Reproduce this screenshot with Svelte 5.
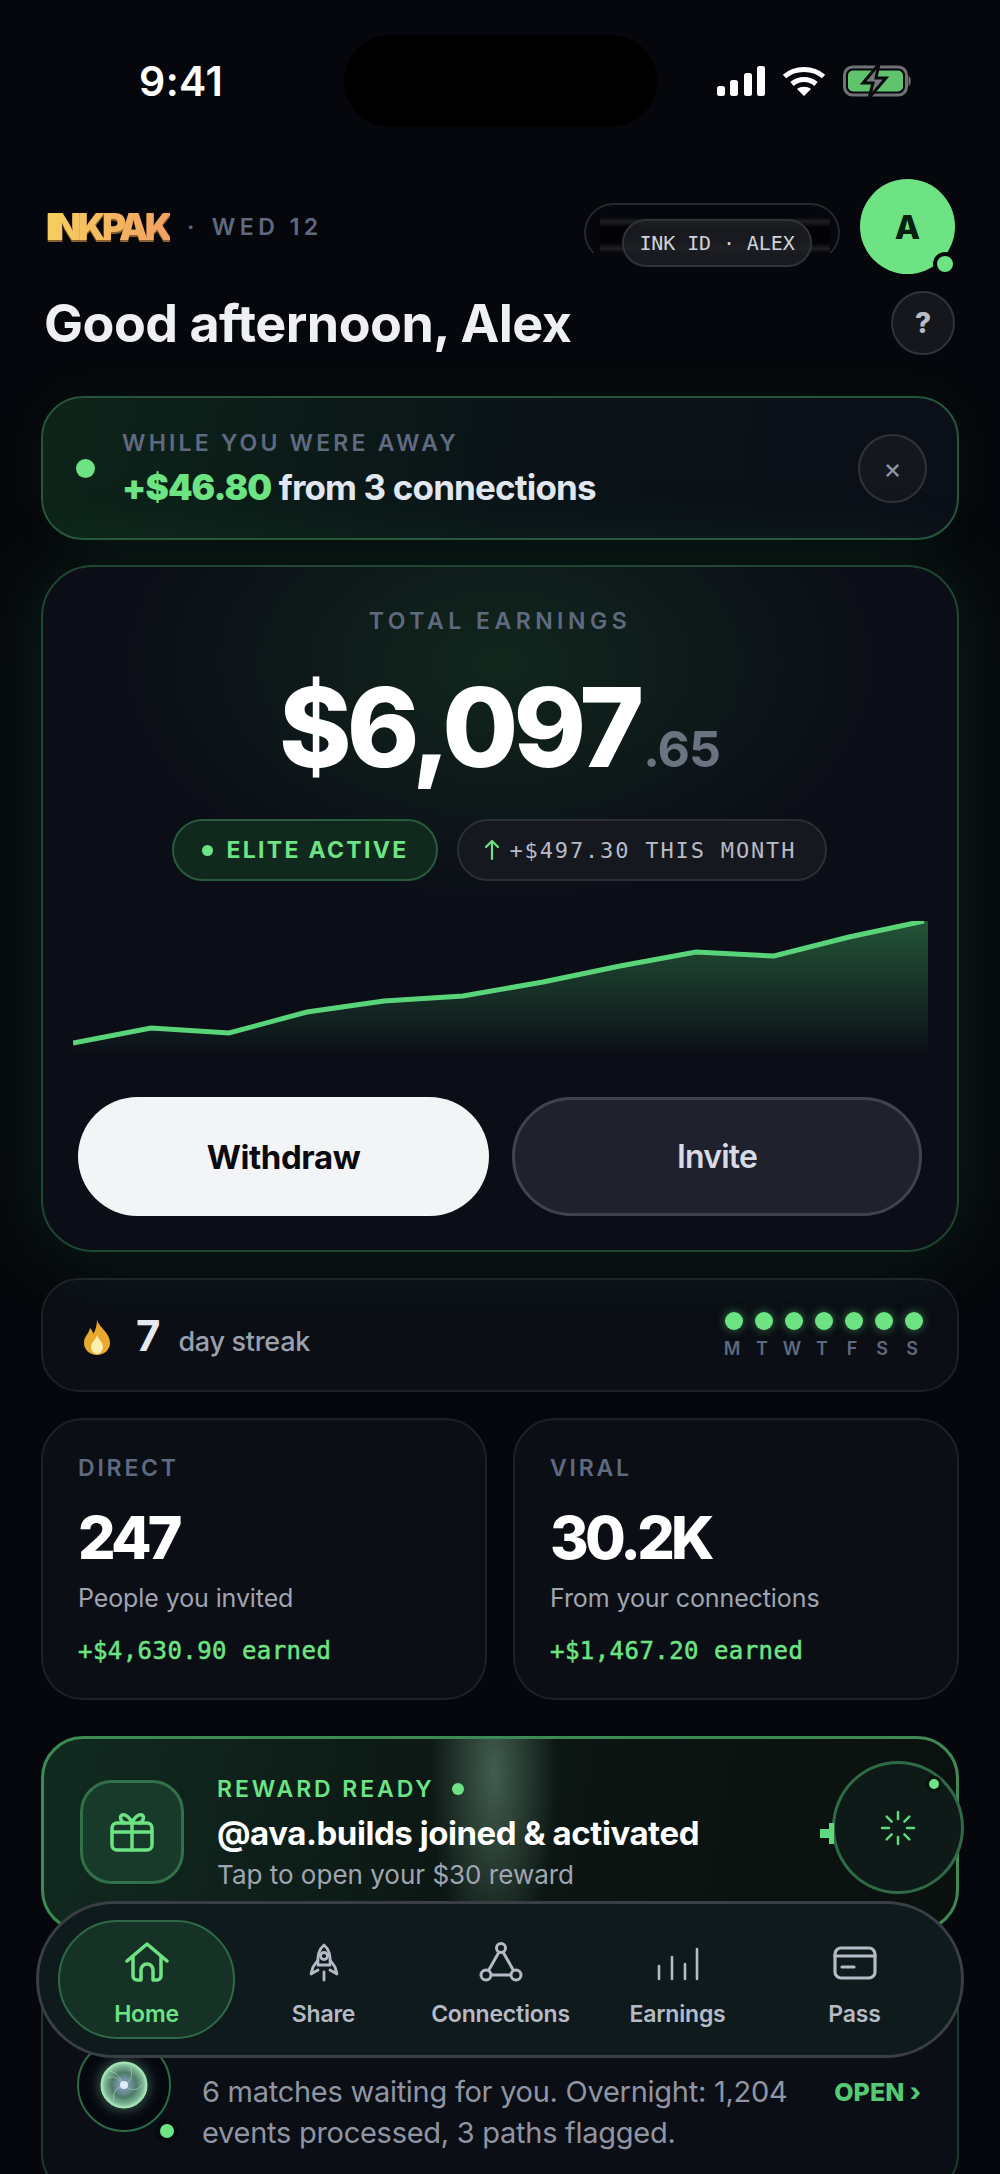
<script>
  const points = [[0,122],[78,107],[156,112],[234,91],[311,80],[390,75],[470,61],[547,45],[623,31],[701,35],[776,16],[851,0]];
  const line = points.map((p) => p.join(',')).join(' ');
  const area = `0,135 ${line} 855,0 855,135`;
  const days = ['M','T','W','T','F','S','S'];
  const spokes = [0,45,90,135,180,225,270,315];
  const tabs = [
    { id: 'share', label: 'Share' },
    { id: 'connections', label: 'Connections' },
    { id: 'earnings', label: 'Earnings' },
    { id: 'pass', label: 'Pass' }
  ];
</script>

<div class="page">
  <div class="status">
    <span class="time">9:41</span>
    <div class="island"></div>
    <div class="sys">
      <svg width="48" height="30" viewBox="0 0 48 30" fill="#fff">
        <rect x="0" y="20" width="8" height="10" rx="2.5"/><rect x="13" y="14" width="8" height="16" rx="2.5"/><rect x="27" y="7" width="8" height="23" rx="2.5"/><rect x="40" y="0" width="8" height="30" rx="2.5"/>
      </svg>
      <svg width="44" height="30" viewBox="0 0 44 30" fill="none" stroke="#fff" stroke-width="5">
        <path d="M2.5 10.5C13 1 31 1 41.5 10.5"/><path d="M10 18c7-6 17-6 24 0"/><path d="M22 30l-7-7c4-3 10-3 14 0z" fill="#fff" stroke="none"/>
      </svg>
      <svg width="70" height="34" viewBox="0 0 70 34">
        <rect x="1.5" y="3" width="62" height="28" rx="8" fill="none" stroke="#6f7175" stroke-width="3"/>
        <rect x="5" y="6.5" width="55" height="21" rx="5" fill="#5fc46c"/>
        <path d="M65.500 12c3 1 3 9 0 10z" fill="#6f7175"/>
        <path d="M36 0L20 19h10l-4 15 17-20H33z" fill="#77797c" stroke="#0a0b10" stroke-width="3"/>
      </svg>
    </div>
  </div>

  <header class="top">
    <div class="brand">
      <span class="logo">INKPAK</span>
      <span class="date"><i>·</i>WED 12</span>
    </div>
    <div class="id-wrap">
      <div class="ghost"><span class="ghost-band"></span></div>
      <span class="id-pill">INK ID · ALEX</span>
    </div>
    <div class="avatar">A<span class="avatar-dot"></span></div>
  </header>

  <div class="greet">
    <h1>Good afternoon, Alex</h1>
    <button class="help">?</button>
  </div>

  <section class="away">
    <span class="away-dot"></span>
    <div class="away-text">
      <div class="label">WHILE YOU WERE AWAY</div>
      <div class="away-main"><b>+$46.80</b> from 3 connections</div>
    </div>
    <button class="close">×</button>
  </section>

  <section class="earn">
    <div class="label center">TOTAL EARNINGS</div>
    <div class="amount">$6,097<span>.65</span></div>
    <div class="pills">
      <span class="pill elite"><i></i>ELITE ACTIVE</span>
      <span class="pill month">
        <svg width="16" height="22" viewBox="0 0 16 22" fill="none" stroke="#6ee384" stroke-width="2.200" stroke-linecap="round" stroke-linejoin="round"><path d="M8 20V2M2 8l6-6 6 6"/></svg>
        +$497.30 THIS MONTH
      </span>
    </div>
    <svg class="chart" width="855" height="135" viewBox="0 0 855 135">
      <defs>
        <linearGradient id="fill" x1="0" y1="0" x2="0" y2="1">
          <stop offset="0" stop-color="#4fd070" stop-opacity=".36"/>
          <stop offset="1" stop-color="#4fd070" stop-opacity="0"/>
        </linearGradient>
      </defs>
      <polygon points={area} fill="url(#fill)"/>
      <polyline points={line} fill="none" stroke="#5ad478" stroke-width="5"/>
    </svg>
    <div class="actions">
      <button class="primary">Withdraw</button>
      <button class="secondary">Invite</button>
    </div>
  </section>

  <section class="streak">
    <svg class="flame" width="28" height="36" viewBox="0 0 28 36">
      <path d="M14 0c1 8 13 13 13 24 0 7-6 12-13 12S1 31 1 24C1 17 6 15 7 9c2 2 3 4 3 6 3-4 4-10 4-15z" fill="#e9a92c"/>
      <path d="M14 16c1 4 6 7 6 12 0 4-3 7-6 7s-6-3-6-7c0-5 5-7 6-12z" fill="#fdeeb4"/>
    </svg>
    <span class="num">7</span>
    <span class="streak-label">day streak</span>
    <div class="week">
      {#each days as d}
        <div class="day"><span></span><small>{d}</small></div>
      {/each}
    </div>
  </section>

  <div class="stats">
    <section class="stat">
      <div class="label">DIRECT</div>
      <div class="stat-num">247</div>
      <div class="stat-sub">People you invited</div>
      <div class="stat-earn">+$4,630.90 earned</div>
    </section>
    <section class="stat">
      <div class="label">VIRAL</div>
      <div class="stat-num">30.2K</div>
      <div class="stat-sub">From your connections</div>
      <div class="stat-earn">+$1,467.20 earned</div>
    </section>
  </div>

  <section class="reward">
    <div class="shine"></div>
    <div class="gift">
      <svg width="46" height="40" viewBox="0 0 46 40" fill="none" stroke="#6ee384" stroke-width="3.500" stroke-linejoin="round" stroke-linecap="round">
        <rect x="3" y="11" width="40" height="27" rx="5"/><path d="M3 20h40M23 11v27"/>
        <path d="M23 11c-2-6-7-9-10-8-3 2-1 7 3 8M23 11c2-6 7-9 10-8 3 2 1 7-3 8"/>
      </svg>
    </div>
    <div class="reward-text">
      <div class="reward-kicker">REWARD READY<i></i></div>
      <div class="reward-title">@ava.builds joined &amp; activated</div>
      <div class="reward-sub">Tap to open your $30 reward</div>
    </div>
  </section>

  <section class="brief">
    <div class="orb-ring">
      <svg class="orb" width="48" height="48" viewBox="0 0 48 48" fill="none">
        <defs>
          <radialGradient id="orbfill" cx="50%" cy="50%" r="50%">
            <stop offset="0" stop-color="#dfe9ff"/><stop offset=".2" stop-color="#7d99b0"/><stop offset=".55" stop-color="#4f7a68"/><stop offset=".85" stop-color="#7cb594"/><stop offset="1" stop-color="#a8e3bc"/>
          </radialGradient>
        </defs>
        <circle cx="24" cy="24" r="22.500" fill="url(#orbfill)" stroke="#a3e4b5" stroke-width="2"/>
        <path d="M6 18c8-6 14 2 18 6s12 8 18 0M14 40c-2-10 4-14 10-16s10-10 6-18M10 10c8 2 10 8 14 14" stroke="#b9dcc8" stroke-width="1" opacity=".6"/>
        <circle cx="24" cy="24" r="4" fill="#e8f0ff" opacity=".9"/>
      </svg>
      <span class="orb-dot"></span>
    </div>
    <p>6 matches waiting for you. Overnight: 1,204 events processed, 3 paths flagged.</p>
    <span class="open">OPEN ›</span>
  </section>

  <div class="bubble">
    <span class="tag"></span>
    <span class="bubble-dot"></span>
    <svg width="36" height="36" viewBox="0 0 36 36" stroke="#5fd97d" stroke-width="2.500" stroke-linecap="round">
      {#each spokes as a}
        <line x1="18" y1="2" x2="18" y2="9" transform="rotate({a} 18 18)"/>
      {/each}
    </svg>
  </div>

  <nav class="nav">
    <div class="tab active">
      <svg width="44" height="40" viewBox="0 0 44 40" fill="none" stroke="currentColor" stroke-width="3.500" stroke-linejoin="round" stroke-linecap="round">
        <path d="M2 19L22 2l20 17"/><path d="M8 15v19a4 4 0 0 0 4 4h4V28a6 6 0 0 1 12 0v10h4a4 4 0 0 0 4-4V15"/>
      </svg>
      <span>Home</span>
    </div>
    {#each tabs as t}
      <div class="tab">
        {#if t.id === 'share'}
          <svg width="44" height="40" viewBox="0 0 44 40" fill="none" stroke="currentColor" stroke-width="2.800" stroke-linejoin="round" stroke-linecap="round">
            <path d="M22 3c5 4 7 10 6 20H16C15 13 17 7 22 3z"/><circle cx="22" cy="14" r="3.500"/><path d="M16 18l-5 7-2 7 7-4M28 18l5 7 2 7-7-4M22 30v8"/>
          </svg>
        {:else if t.id === 'connections'}
          <svg width="44" height="40" viewBox="0 0 44 40" fill="none" stroke="currentColor" stroke-width="3">
            <circle cx="22" cy="6" r="4.500"/><circle cx="7" cy="33" r="5"/><circle cx="37" cy="33" r="5"/><path d="M20 10L9.500 28.500M24 10l10.500 18.500M12 33h20"/>
          </svg>
        {:else if t.id === 'earnings'}
          <svg width="44" height="40" viewBox="0 0 44 40" fill="none" stroke="currentColor" stroke-width="2.600" stroke-linecap="round">
            <path d="M3 24v13M16 15v22M29 22v15M41 7v30"/>
          </svg>
        {:else}
          <svg width="44" height="40" viewBox="0 0 44 40" fill="none" stroke="currentColor" stroke-width="3.200" stroke-linecap="round">
            <rect x="2" y="6" width="40" height="30" rx="6"/><path d="M2 14h40"/><path d="M9 25h12"/>
          </svg>
        {/if}
        <span>{t.label}</span>
      </div>
    {/each}
  </nav>
</div>

<style>
  :global(body) { margin: 0; background: #06070c; }
  * { box-sizing: border-box; }
  .page {
    position: relative; width: 1000px; height: 2174px; overflow: hidden; padding: 0 41px;
    background: #06070c; font-family: Inter, "Liberation Sans", sans-serif; color: #fff;
  }
  button { font-family: inherit; padding: 0; cursor: pointer; }

  .status { position: relative; height: 179px; }
  .time { position: absolute; left: 98px; top: 58px; font-size: 41px; line-height: 46px; font-weight: 600; letter-spacing: .4px; }
  .island { position: absolute; left: 303px; top: 35px; width: 313px; height: 92px; border-radius: 46px; background: #000; }
  .sys { position: absolute; left: 676px; top: 64px; display: flex; align-items: center; gap: 17px; }

  .top { display: flex; align-items: center; height: 95px; padding: 0 4px 0 5px; }
  .brand { display: flex; align-items: center; gap: 17px; flex: 1; }
  .logo {
    font-size: 37px; line-height: 36px; font-weight: 900; letter-spacing: -3.800px; width: 124px; white-space: nowrap;
    background: linear-gradient(90deg, #f7cf5e, #f2a063); -webkit-background-clip: text; background-clip: text; color: transparent;
    filter: drop-shadow(0 2px 0 #8a5f2e);
  }
  .date { font-size: 23px; font-weight: 600; letter-spacing: 4.500px; color: #5f6a80; }
  .date i { margin-right: 13px; font-style: normal; }
  .id-wrap { position: relative; width: 190px; height: 48px; margin: 33px 48px 0 0; }
  .ghost { position: absolute; left: -38px; top: -16px; width: 256px; height: 59px; border: 2px solid #26282e; border-bottom-color: transparent; border-radius: 48px; }
  .ghost-band { position: absolute; left: 14px; right: 8px; top: 12px; height: 36px; background: linear-gradient(180deg, #030305, #1e2024 12%, #030305 28%, #030305 72%, #1e2024 88%, #06060a); }
  .id-pill {
    position: absolute; inset: 0; display: flex; align-items: center; justify-content: center; border-radius: 24px;
    border: 2px solid #31333a; background: rgba(30,32,38,.8); font: 500 20px "DejaVu Sans Mono", monospace; letter-spacing: -.1px; color: #d0d3da;
  }
  .avatar { position: relative; width: 95px; height: 95px; border-radius: 50%; background: #6ee384; color: #06200f; font-size: 33px; font-weight: 800; display: flex; align-items: center; justify-content: center; }
  .avatar-dot { position: absolute; right: -2px; bottom: -2px; width: 24px; height: 24px; border-radius: 50%; background: #6ee384; border: 4px solid #06070c; }

  .greet { display: flex; align-items: center; justify-content: space-between; margin-top: 17px; height: 63px; padding-left: 3px; }
  h1 { margin: 1px 0 0; font-size: 52px; line-height: 63px; font-weight: 700; letter-spacing: -.5px; color: #eff0f4; }
  .help { width: 64px; height: 64px; margin-right: 4px; border-radius: 50%; border: 2px solid #30333a; background: #15171c; color: #b6bac4; font-size: 28px; font-weight: 800; }

  .label { font-size: 23px; line-height: 26px; font-weight: 600; letter-spacing: 3px; color: #5f6a80; }
  .center { text-align: center; }

  .away {
    display: flex; align-items: center; height: 144px; margin-top: 42px; padding: 0 30px 0 33px; border-radius: 42px; border: 2px solid #27553a;
    background: linear-gradient(100deg, #0d2419, #0b1418 50%, #0b0f18);
    box-shadow: 0 0 50px rgba(60,190,100,.06);
  }
  .away-dot { width: 19px; height: 19px; border-radius: 50%; background: #6ee384; margin-right: 27px; flex: none; }
  .away-text { flex: 1; }
  .away .label { letter-spacing: 3.200px; }
  .away-main { margin-top: 11px; font-size: 35px; line-height: 40px; font-weight: 700; letter-spacing: -.85px; color: #e2e7f0; }
  .away-main b { color: #6ee384; }
  .close { width: 69px; height: 69px; border-radius: 50%; border: 2px solid #30333a; background: #14171d; color: #9096a4; font-size: 28px; }

  .earn {
    position: relative; height: 687px; margin-top: 25px; padding: 41px 36px 0; border-radius: 52px; border: 2px solid #1e4630;
    background: radial-gradient(ellipse 380px 240px at 50% 14%, #11261d, rgba(11,14,23,0) 100%), #0b0e17;
    box-shadow: 0 0 90px rgba(60,200,100,.14);
  }
  .earn .label { letter-spacing: 4.500px; }
  .amount { margin-top: 26px; text-align: center; font-size: 110px; line-height: 134px; font-weight: 800; letter-spacing: -4.800px; padding-right: 1px; }
  .amount span { font-size: 50px; font-weight: 700; letter-spacing: -1px; color: #6b7280; margin-left: 4px; }
  .pills { display: flex; justify-content: center; gap: 19px; margin-top: 3px; padding-right: 2px; }
  .pill { display: flex; align-items: center; height: 62px; border-radius: 31px; }
  .elite { width: 266px; padding-left: 28px; background: #10281e; border: 2px solid #2a5a3c; color: #6ee384; font-size: 23px; font-weight: 700; letter-spacing: 2.300px; }
  .elite i { width: 11px; height: 11px; border-radius: 50%; background: #6ee384; margin-right: 14px; }
  .month { width: 370px; padding-left: 25px; gap: 10px; background: #16181f; border: 2px solid #2c2e37; color: #b7bbc6; font: 400 22px "DejaVu Sans Mono", monospace; letter-spacing: 1.850px; white-space: nowrap; }
  .chart { position: absolute; left: 30px; top: 354px; }
  .actions { position: absolute; left: 35px; right: 34px; top: 530px; display: grid; grid-template-columns: 411px 410px; gap: 23px; }
  .actions button { height: 119px; border-radius: 60px; font-size: 32px; font-weight: 700; letter-spacing: -.8px; }
  .actions .primary { background: #f3f4f6; border: none; color: #0a0b10; font-size: 33px; letter-spacing: -.4px; }
  .actions .secondary { background: #1f212c; border: 3px solid #41434c; color: #d8dbe4; font-weight: 600; }

  .streak {
    display: flex; align-items: center; height: 114px; margin-top: 26px; padding: 0 0 0 40px; border-radius: 38px; border: 2px solid #1e2026; background: #0b0e15;
  }
  .flame { margin-top: 4px; }
  .num { margin-left: 25px; font-size: 42px; font-weight: 700; color: #e5e9f2; }
  .streak-label { margin: 13px 0 0 18px; font-size: 27px; font-weight: 500; letter-spacing: -.3px; color: #9aa0ad; }
  .week { margin-left: auto; margin-right: 33px; display: flex; gap: 9px; }
  .day { width: 21px; display: flex; flex-direction: column; align-items: center; gap: 8px; }
  .day span { width: 18px; height: 18px; border-radius: 50%; background: #6ee384; box-shadow: 0 0 10px rgba(110,227,132,.5); }
  .day small { font-size: 18px; line-height: 20px; font-weight: 600; color: #5f6a80; margin-top: 1px; margin-left: -3px; }

  .stats { display: grid; grid-template-columns: 1fr 1fr; gap: 26px; margin-top: 26px; }
  .stat { height: 282px; padding: 35px 35px 0; border-radius: 42px; border: 2px solid #1e2026; background: #0b0e15; }
  .stat .label { letter-spacing: 2.800px; }
  .stat-num { margin-top: 22px; font-size: 59px; line-height: 70px; font-weight: 800; letter-spacing: -3.800px; }
  .stat-sub { margin-top: 9px; font-size: 25px; line-height: 32px; color: #a0a5b2; letter-spacing: -.1px; }
  .stat-earn { margin-top: 21px; font: 400 24px/32px "DejaVu Sans Mono", monospace; -webkit-text-stroke: .5px #6ee384; color: #6ee384; letter-spacing: .45px; white-space: nowrap; }

  .reward {
    position: relative; overflow: hidden; display: flex; align-items: center; height: 196px; margin-top: 36px; padding: 0 0 0 36px; border-radius: 42px; border: 3px solid #3e8a55;
    background: linear-gradient(100deg, #112a20, #0c1714 45%, #0a100e);
  }
  .shine { position: absolute; left: 320px; top: -40px; width: 260px; height: 250px; background: radial-gradient(ellipse 64px 190px at 50% 30%, rgba(170,230,190,.34), rgba(170,230,190,0)); }
  .gift { position: relative; width: 104px; height: 104px; margin-top: -5px; border-radius: 32px; border: 3px solid #317049; background: #173a2a; display: flex; align-items: center; justify-content: center; }
  .reward-text { position: relative; margin: -3px 0 0 33px; }
  .reward-kicker { display: flex; align-items: center; gap: 17px; font-size: 23px; line-height: 30px; font-weight: 600; letter-spacing: 2.900px; color: #6ee384; }
  .reward-kicker i { width: 12px; height: 12px; border-radius: 50%; background: #6ee384; }
  .reward-title { margin-top: 9px; font-size: 33px; line-height: 40px; font-weight: 700; letter-spacing: -.45px; }
  .reward-sub { margin-top: 5px; font-size: 26px; line-height: 34px; color: #a0a5b2; letter-spacing: 0; }

  .brief {
    display: flex; height: 235px; margin-top: 29px; padding: 0 36px 0 34px; border-radius: 42px; border: 2px solid #1c3a2b; background: #0b0e15;
  }
  .orb-ring { position: relative; flex: none; width: 94px; height: 94px; margin-top: 75px; border-radius: 50%; border: 2px solid #2b6a45; background: #060810; display: flex; align-items: center; justify-content: center; }
  .orb { filter: drop-shadow(0 0 7px rgba(140,220,170,.5)); }
  .orb-dot { position: absolute; right: -10px; bottom: -13px; width: 24px; height: 24px; border-radius: 50%; background: #6ee384; border: 5px solid #070a0e; }
  .brief p { margin: 108px 0 0 31px; width: 610px; font-size: 29px; line-height: 41px; letter-spacing: -.27px; color: #9095a4; }
  .open { margin: 114px 0 0 auto; font-size: 25px; line-height: 30px; font-weight: 800; color: #55c973; white-space: nowrap; }

  .bubble { position: absolute; left: 832px; top: 1761px; width: 132px; height: 133px; border-radius: 50%; border: 3px solid #2f6a47; background: #0e1a17; display: flex; align-items: center; justify-content: center; }
  .tag { position: absolute; left: -15px; top: 59px; width: 14px; height: 21px; background: linear-gradient(#5fd97d,#5fd97d) right / 5px 100% no-repeat, linear-gradient(#5fd97d,#5fd97d) left center / 100% 9px no-repeat; }
  .bubble-dot { position: absolute; left: 91px; top: 12px; width: 16px; height: 16px; border-radius: 50%; background: #6ee384; border: 3px solid #06120c; }

  .nav {
    position: absolute; left: 36px; top: 1901px; width: 928px; height: 157px; padding: 0 19px; border-radius: 79px; border: 3px solid #3a3e45;
    background: #0f1a1c; display: grid; grid-template-columns: repeat(5, 177px); align-items: center;
  }
  .tab { display: flex; flex-direction: column; align-items: center; height: 119px; padding-top: 20px; color: #b5bac6; border-radius: 60px; border: 2px solid transparent; }
  .tab span { margin-top: 18px; font-size: 23px; line-height: 28px; font-weight: 600; letter-spacing: -.2px; }
  .tab.active { color: #6ee384; background: #163226; border-color: #2e6a47; }
</style>
